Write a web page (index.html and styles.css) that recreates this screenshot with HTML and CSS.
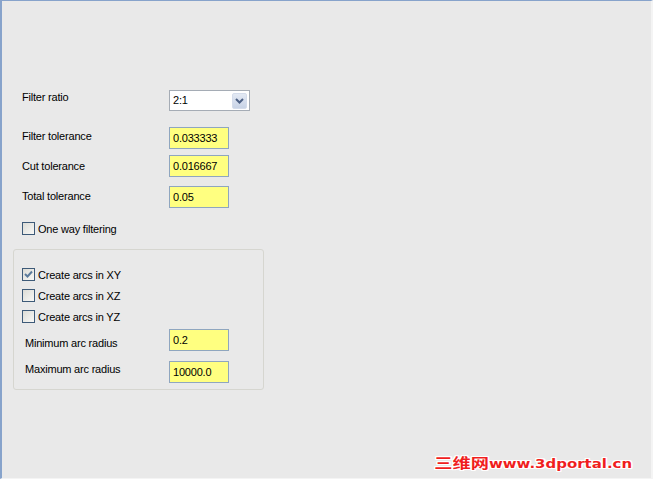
FILE: index.html
```html
<!DOCTYPE html>
<html lang="en">
<head>
  <meta charset="UTF-8" />
  <meta name="viewport" content="width=device-width, initial-scale=1.0"/>
  <title>Filter options</title>
  <link rel="stylesheet" href="styles.css">
</head>
<body>
  <div class="panel">
    <div class="row row-ratio">
      <span class="label up-4">Filter ratio</span>
      <div class="select">
        <span class="select-value">2:1</span>
        <span class="drop">
          <svg width="9" height="6" viewBox="0 0 9 6"><path d="M1 1 L4.5 4.5 L8 1" fill="none" stroke="#4d6185" stroke-width="2"/></svg>
        </span>
      </div>
    </div>

    <div class="row row-filter">
      <span class="label up-2">Filter tolerance</span>
      <input class="field" type="text" value="0.033333" />
    </div>
    <div class="row row-cut">
      <span class="label">Cut tolerance</span>
      <input class="field" type="text" value="0.016667" />
    </div>
    <div class="row row-total">
      <span class="label up-1">Total tolerance</span>
      <input class="field" type="text" value="0.05" />
    </div>

    <label class="check row-oneway">
      <span class="box"></span>
      <span>One way filtering</span>
    </label>

    <div class="group">
      <label class="check row-xy">
        <span class="box">
          <svg width="11" height="11" viewBox="0 0 11 11"><path d="M2 5 L4.5 7.5 L9 2.5" fill="none" stroke="#5b7b9c" stroke-width="2"/></svg>
        </span>
        <span>Create arcs in XY</span>
      </label>
      <label class="check row-xz">
        <span class="box"></span>
        <span>Create arcs in XZ</span>
      </label>
      <label class="check row-yz">
        <span class="box"></span>
        <span>Create arcs in YZ</span>
      </label>
      <div class="row row-min">
        <span class="label label-inner down-2">Minimum arc radius</span>
        <input class="field" type="text" value="0.2" />
      </div>
      <div class="row row-max">
        <span class="label label-inner up-3">Maximum arc radius</span>
        <input class="field" type="text" value="10000.0" />
      </div>
    </div>

    <div class="mark"><span class="mark-cn">三维网</span><span class="mark-url">www.3dportal.cn</span></div>
  </div>
</body>
</html>
```

FILE: styles.css
```css
html, body {
  margin: 0;
  padding: 0;
}
body {
  font-family: "Liberation Sans", Arial, sans-serif;
  font-size: 11px;
  letter-spacing: -0.2px;
  color: #000;
  background-color: #e9e9e9;
}
.panel {
  position: relative;
  box-sizing: border-box;
  width: 653px;
  height: 479px;
  border-top: 1px solid #87a3cb;
  border-left: 2px solid #87a3cb;
  border-right: 2px solid #f4f4f4;
  border-bottom: 1px solid #f4f4f4;
  padding: 89px 0 0 20px;
  background-color: #e9e9e9;
}
.row {
  display: flex;
  align-items: center;
}
.label {
  width: 147px;
}
.label-inner {
  width: 144px;
  padding-left: 3px;
}
/* small nudges so labels sit like the dialog's */
.up-1 { padding-bottom: 2px; }
.up-2 { padding-bottom: 4px; }
.up-3 { padding-bottom: 6px; }
.up-4 { padding-bottom: 8px; }
.down-2 { padding-top: 5px; }

/* combo box */
.select {
  box-sizing: border-box;
  width: 81px;
  height: 21px;
  border: 1px solid #a5acb5;
  background-color: #fff;
  display: flex;
  align-items: center;
  justify-content: space-between;
  padding: 0 2px 0 3px;
}
.select-value {
  padding-bottom: 1px;
}
.drop {
  box-sizing: border-box;
  width: 15px;
  height: 16px;
  border-radius: 2px;
  background: linear-gradient(#e3e9f4, #c8d3e6);
  border: 1px solid #d4dceb;
  display: flex;
  align-items: center;
  justify-content: center;
}

/* text fields */
.field {
  box-sizing: border-box;
  width: 60px;
  height: 22px;
  margin: 0;
  padding: 0 3px;
  border: 1px solid #8fa6bf;
  background-color: #ffff80;
  font-family: inherit;
  font-size: 11px;
  letter-spacing: -0.2px;
  color: #000;
  outline: none;
}

.row-ratio { height: 21px; }
.row-filter { margin-top: 16px; }
.row-cut { margin-top: 6px; }
.row-total { margin-top: 9px; }

/* check boxes */
.check {
  display: flex;
  align-items: center;
  gap: 3px;
  height: 13px;
}
.box {
  box-sizing: border-box;
  width: 13px;
  height: 13px;
  border: 1px solid #3d5a78;
  background: linear-gradient(135deg, #dcdcd6, #f8f8f6);
  display: flex;
  align-items: center;
  justify-content: center;
}
.row-oneway { margin-top: 14px; }

/* arc options group */
.group {
  box-sizing: border-box;
  width: 251px;
  height: 141px;
  margin: 14px 0 0 -9px;
  padding: 18px 0 0 8px;
  border: 1px solid #d6d6d0;
  border-radius: 3px;
}
.row-xz { margin-top: 8px; }
.row-yz { margin-top: 8px; }
.row-min { margin-top: 6px; }
.row-max { margin-top: 10px; }

/* site mark in the corner */
.mark {
  position: absolute;
  right: 19px;
  bottom: 6px;
  color: #f01e1e;
  font-weight: bold;
  letter-spacing: 0;
  white-space: nowrap;
  text-shadow: 1px 0 #fff, -1px 0 #fff, 0 1px #fff, 0 -1px #fff,
               1px 1px #fff, -1px -1px #fff, 1px -1px #fff, -1px 1px #fff;
  transform: scaleX(1.3);
  transform-origin: right center;
}
.mark-cn {
  font-family: "Noto Sans CJK SC", sans-serif;
  font-size: 14px;
}
.mark-url {
  font-family: "DejaVu Sans", sans-serif;
  font-size: 11.5px;
}
```
